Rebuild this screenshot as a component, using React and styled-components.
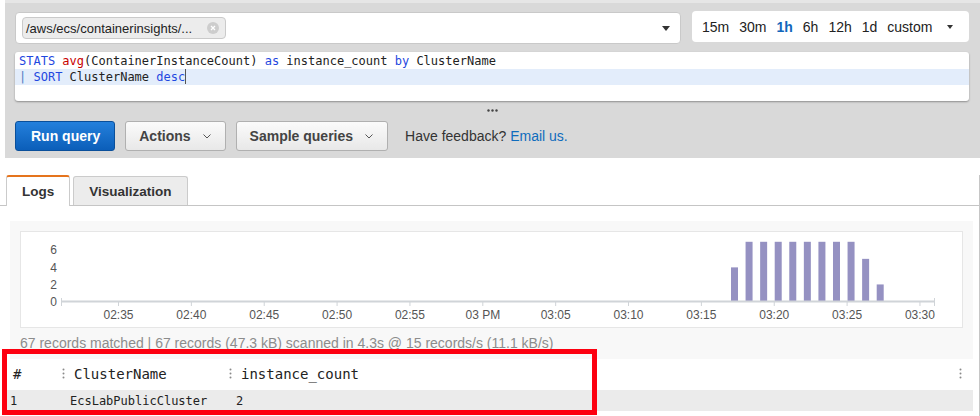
import React from 'react';
import styled, { createGlobalStyle } from 'styled-components';

const GlobalStyle = createGlobalStyle`
  html, body {
    margin: 0;
    padding: 0;
    background: #ffffff;
  }
  body {
    font-family: "Liberation Sans", Arial, sans-serif;
    width: 980px;
    height: 416px;
    overflow: hidden;
  }
`;

const Page = styled.div`
  position: relative;
  width: 980px;
  height: 416px;
  overflow: hidden;
`;

const QueryPanel = styled.div`
  margin-left: 5px;
  background: #d9d9d9;
  border-top: 3px solid #e6e6e6;
  padding: 8px 11px 7px 10px;
`;

const TopRow = styled.div`
  display: flex;
  align-items: flex-start;
  gap: 11px;
  height: 33px;
`;

const LogGroupBox = styled.div`
  box-sizing: border-box;
  width: 666px;
  height: 32px;
  margin-top: 1px;
  background: #fff;
  border: 1px solid #c9c9c9;
  border-radius: 4px;
  padding: 0 10px 0 6px;
  display: flex;
  align-items: center;
  justify-content: space-between;
`;

const Chip = styled.div`
  box-sizing: border-box;
  height: 22px;
  width: 204px;
  display: flex;
  align-items: center;
  padding: 0 6px 0 3px;
  background: #ececec;
  border: 1px solid #cacaca;
  border-radius: 4px;
  font-size: 13px;
  color: #222;
`;

const ClearIcon = styled.span`
  margin-left: auto;
  width: 12px;
  height: 12px;
  border-radius: 50%;
  background: #cdcdcd;
  display: flex;
  align-items: center;
  justify-content: center;
`;

const Caret = styled.span`
  width: 0;
  height: 0;
  border-left: ${({ $size }) => $size}px solid transparent;
  border-right: ${({ $size }) => $size}px solid transparent;
  border-top: ${({ $size }) => $size + 1}px solid #333;
`;

const TimeBox = styled.div`
  box-sizing: border-box;
  flex: 1;
  height: 31px;
  background: #fff;
  border-radius: 4px;
  padding-left: 10px;
  display: flex;
  align-items: center;
  gap: 10px;
  font-size: 14px;
  color: #222;
`;

const TimeItem = styled.span`
  color: ${({ $active }) => ($active ? '#1166bb' : '#222')};
  font-weight: ${({ $active }) => ($active ? 700 : 400)};
`;

const TimeCaret = styled(Caret)`
  margin-left: 5px;
`;

const Editor = styled.div`
  margin-top: 8px;
  height: 49px;
  box-sizing: border-box;
  padding-top: 1px;
  background: #fff;
  border-radius: 3px;
  box-shadow: 0 1px 2px rgba(0, 0, 0, 0.35);
  font-family: "DejaVu Sans Mono", Menlo, monospace;
  font-size: 12px;
  color: #222;
`;

const CodeLine = styled.div`
  height: 16px;
  line-height: 16px;
  padding-left: 4px;
  white-space: pre;
  background: ${({ $active }) => ($active ? '#e3edfb' : 'transparent')};
`;

const Kw = styled.span`
  color: #1f48e0;
`;

const Fn = styled.span`
  color: #c80000;
`;

const Pipe = styled.span`
  color: #4d7cc4;
`;

const Cursor = styled.span`
  display: inline-block;
  width: 1px;
  height: 15px;
  vertical-align: -3px;
  background: #555;
`;

const GripRow = styled.div`
  height: 20px;
  display: flex;
  justify-content: center;
  align-items: center;
  padding-bottom: 2px;
  box-sizing: border-box;
`;

const ButtonRow = styled.div`
  display: flex;
  align-items: center;
  gap: 10px;
  height: 30px;
`;

const Button = styled.button`
  box-sizing: border-box;
  height: 30px;
  display: flex;
  align-items: center;
  gap: 12px;
  padding: 0 14px 0 13px;
  border-radius: 3px;
  font-family: "Liberation Sans", Arial, sans-serif;
  font-size: 14px;
  font-weight: 700;
  cursor: pointer;
  color: ${({ $primary }) => ($primary ? '#fff' : '#444')};
  background: ${({ $primary }) =>
    $primary ? 'linear-gradient(#2480dc, #0b5eb9)' : 'linear-gradient(#fbfbfb, #e8e8e8)'};
  border: 1px solid ${({ $primary }) => ($primary ? '#0a4f9a' : '#b0b0b0')};
`;

const RunButton = styled(Button)`
  padding: 0 14px 0 15px;
`;

const Feedback = styled.div`
  margin-left: 7px;
  font-size: 14px;
  color: #333;
  white-space: pre;
`;

const Link = styled.a`
  color: #0f6cbd;
  text-decoration: none;
`;

const Content = styled.div`
  border-right: 1px solid #c6c6c6;
  height: 258px;
`;

const TabBar = styled.div`
  margin-top: 17px;
  height: 30px;
  padding-left: 6px;
  display: flex;
  align-items: flex-end;
  gap: 3px;
  border-bottom: 1px solid #c5c5c5;
`;

const Tab = styled.div`
  box-sizing: border-box;
  height: ${({ $active }) => ($active ? 31 : 29)}px;
  margin-bottom: ${({ $active }) => ($active ? -1 : 0)}px;
  padding: 0 15px;
  display: flex;
  align-items: center;
  font-size: 13.5px;
  font-weight: 700;
  color: #333;
  background: ${({ $active }) => ($active ? '#fff' : '#ececec')};
  border: 1px solid #cbcbcb;
  border-bottom: none;
  border-top: ${({ $active }) => ($active ? '2px solid #e5741d' : '1px solid #cbcbcb')};
  border-radius: 3px 3px 0 0;
`;

const ChartPanel = styled.div`
  margin: 15px 0 0 10px;
  width: 963px;
  box-sizing: border-box;
  background: #f8f8f8;
  padding: 10px 10px 8px;
`;

const ChartBox = styled.div`
  height: 97px;
  box-sizing: border-box;
  background: #fff;
  border: 1px solid #e6e6e6;
`;

const Records = styled.div`
  margin-top: 7px;
  font-size: 14px;
  line-height: 16px;
  color: #8c8c8c;
  white-space: nowrap;
`;

const Table = styled.div`
  margin-left: 5px;
  width: 968px;
  font-family: "DejaVu Sans Mono", Menlo, monospace;
  color: #222;
`;

const Row = styled.div`
  display: grid;
  grid-template-columns: 55px 166px 1fr 20px;
  align-items: center;
  height: ${({ $head }) => ($head ? 29 : 21)}px;
  margin-top: ${({ $head }) => ($head ? 0 : 2)}px;
  font-size: ${({ $head }) => ($head ? 14 : 12)}px;
  background: ${({ $head }) => ($head ? '#fff' : '#ebebeb')};
`;

const HeadCell = styled.div`
  display: flex;
  align-items: center;
  padding-left: ${({ $pad }) => $pad}px;
  gap: 9px;
  white-space: pre;
`;

const Cell = styled.div`
  padding-left: ${({ $pad }) => $pad}px;
  white-space: pre;
`;

const Highlight = styled.div`
  position: absolute;
  left: 2px;
  top: 349px;
  width: 595px;
  height: 66px;
  box-sizing: border-box;
  border: 5px solid #fd0010;
  pointer-events: none;
`;

const Handle = () => (
  <svg width="3" height="11" viewBox="0 0 3 11">
    <circle cx="1.5" cy="1.5" r="1" fill="#8a8a8a" />
    <circle cx="1.5" cy="5.5" r="1" fill="#8a8a8a" />
    <circle cx="1.5" cy="9.5" r="1" fill="#8a8a8a" />
  </svg>
);

const Chevron = () => (
  <svg width="8" height="5" viewBox="0 0 8 5">
    <polyline points="0.5,0.5 4,4 7.5,0.5" fill="none" stroke="#555" strokeWidth="1" />
  </svg>
);

const labels = ['02:35', '02:40', '02:45', '02:50', '02:55', '03 PM', '03:05', '03:10', '03:15', '03:20', '03:25', '03:30'];
const bars = [4, 7, 7, 7, 7, 7, 7, 7, 7, 5, 2];

const Chart = () => {
  const base = 69.5;
  const unit = 8.53;
  return (
    <svg width="941" height="95" viewBox="0 0 941 95" style={{ display: 'block' }}>
      {[0, 2, 4, 6].map((v) => (
        <text
          key={v}
          x="36"
          y={74 - v * 8.6}
          textAnchor="end"
          fontSize="12"
          fill="#555"
          fontFamily="Liberation Sans, Arial, sans-serif"
        >
          {v}
        </text>
      ))}
      {bars.map((v, i) => {
        const cx = 713.5 + i * 14.57;
        return <rect key={i} x={cx - 3.5} y={base - v * unit} width="7" height={v * unit} fill="#9591c2" />;
      })}
      <line x1="40" y1="69.5" x2="914" y2="69.5" stroke="#d0d4d8" strokeWidth="2" />
      <line x1="40.5" y1="66" x2="40.5" y2="74" stroke="#d0d4d8" strokeWidth="1" />
      <line x1="913.5" y1="66" x2="913.5" y2="74" stroke="#d0d4d8" strokeWidth="1" />
      {labels.map((l, i) => {
        const x = 97.5 + i * 72.86;
        return (
          <g key={l}>
            <line x1={x} y1="70" x2={x} y2="74" stroke="#d0d4d8" strokeWidth="1" />
            <text
              x={x}
              y="87"
              textAnchor="middle"
              fontSize="12"
              fill="#555"
              fontFamily="Liberation Sans, Arial, sans-serif"
            >
              {l}
            </text>
          </g>
        );
      })}
    </svg>
  );
};

const App = () => {
  const times = ['15m', '30m', '1h', '6h', '12h', '1d', 'custom'];
  return (
    <Page>
      <GlobalStyle />
      <QueryPanel>
        <TopRow>
          <LogGroupBox>
            <Chip>
              /aws/ecs/containerinsights/...
              <ClearIcon>
                <svg width="6" height="6" viewBox="0 0 6 6">
                  <path d="M1 1 L5 5 M5 1 L1 5" stroke="#fff" strokeWidth="1.3" />
                </svg>
              </ClearIcon>
            </Chip>
            <Caret $size={4} />
          </LogGroupBox>
          <TimeBox>
            {times.map((t) => (
              <TimeItem key={t} $active={t === '1h'}>
                {t}
              </TimeItem>
            ))}
            <TimeCaret $size={3.5} />
          </TimeBox>
        </TopRow>
        <Editor>
          <CodeLine>
            <Kw>STATS</Kw> <Fn>avg</Fn>(ContainerInstanceCount) <Kw>as</Kw> instance_count <Kw>by</Kw> ClusterName
          </CodeLine>
          <CodeLine $active>
            <Pipe>|</Pipe> <Kw>SORT</Kw> ClusterName <Kw>desc</Kw>
            <Cursor />
          </CodeLine>
        </Editor>
        <GripRow>
          <svg width="11" height="3" viewBox="0 0 11 3">
            <circle cx="1.5" cy="1.5" r="1.2" fill="#444" />
            <circle cx="5.5" cy="1.5" r="1.2" fill="#444" />
            <circle cx="9.5" cy="1.5" r="1.2" fill="#444" />
          </svg>
        </GripRow>
        <ButtonRow>
          <RunButton $primary>Run query</RunButton>
          <Button>
            Actions
            <Chevron />
          </Button>
          <Button>
            Sample queries
            <Chevron />
          </Button>
          <Feedback>
            Have feedback? <Link href="#">Email us.</Link>
          </Feedback>
        </ButtonRow>
      </QueryPanel>
      <Content>
        <TabBar>
          <Tab $active>Logs</Tab>
          <Tab>Visualization</Tab>
        </TabBar>
        <ChartPanel>
          <ChartBox>
            <Chart />
          </ChartBox>
          <Records>67 records matched | 67 records (47.3 kB) scanned in 4.3s @ 15 records/s (11.1 kB/s)</Records>
        </ChartPanel>
        <Table>
          <Row $head>
            <HeadCell $pad={8}>#</HeadCell>
            <HeadCell $pad={2}>
              <Handle />
              ClusterName
            </HeadCell>
            <HeadCell $pad={3}>
              <Handle />
              instance_count
            </HeadCell>
            <HeadCell $pad={6}>
              <Handle />
            </HeadCell>
          </Row>
          <Row>
            <Cell $pad={5}>1</Cell>
            <Cell $pad={10}>EcsLabPublicCluster</Cell>
            <Cell $pad={10}>2</Cell>
            <Cell />
          </Row>
        </Table>
      </Content>
      <Highlight />
    </Page>
  );
};

export default App;
